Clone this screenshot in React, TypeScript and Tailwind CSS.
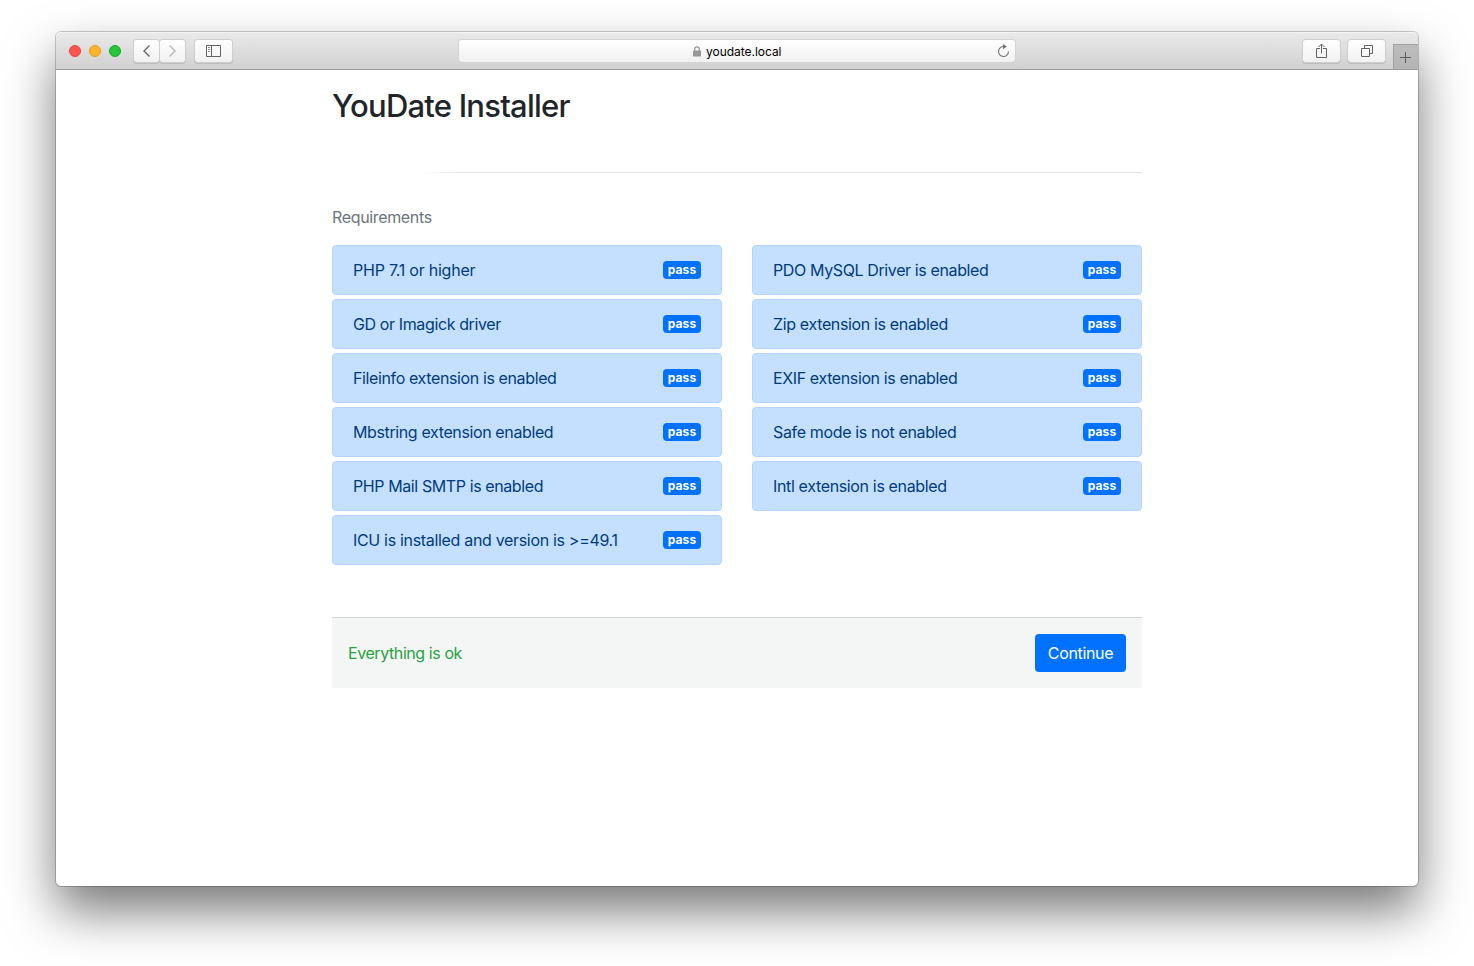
import type { ReactNode } from 'react';

type Item = { label: string; tracking: string };

const left: Item[] = [
  { label: 'PHP 7.1 or higher', tracking: 'tracking-[-0.23px]' },
  { label: 'GD or Imagick driver', tracking: 'tracking-[-0.38px]' },
  { label: 'Fileinfo extension is enabled', tracking: 'tracking-[-0.38px]' },
  { label: 'Mbstring extension enabled', tracking: 'tracking-[-0.38px]' },
  { label: 'PHP Mail SMTP is enabled', tracking: 'tracking-[-0.4px]' },
  { label: 'ICU is installed and version is >=49.1', tracking: 'tracking-[-0.32px]' },
];

const right: Item[] = [
  { label: 'PDO MySQL Driver is enabled', tracking: 'tracking-[-0.38px]' },
  { label: 'Zip extension is enabled', tracking: 'tracking-[-0.35px]' },
  { label: 'EXIF extension is enabled', tracking: 'tracking-[-0.38px]' },
  { label: 'Safe mode is not enabled', tracking: 'tracking-[-0.35px]' },
  { label: 'Intl extension is enabled', tracking: 'tracking-[-0.35px]' },
];

function ToolButton({ className, children }: { className: string; children: ReactNode }) {
  return (
    <button
      className={`flex h-[22px] items-center justify-center bg-linear-to-b from-white to-[#f1f1f1] shadow-[0_0_0_1px_#cecece,0_1px_0_1px_#bdbdbd] ${className}`}
    >
      {children}
    </button>
  );
}

function Toolbar() {
  return (
    <header className="flex h-[38px] items-start rounded-t-[5px] border-t border-b border-t-[#f4f4f4] border-b-[#9d9d9d] bg-linear-to-b from-[#e9e9e9] to-[#d1d1d1]">
      <div className="mt-3 ml-[13px] flex gap-2">
        <span className="size-3 rounded-full border border-[#e2463f] bg-[#ff5350]" />
        <span className="size-3 rounded-full border border-[#e09e28] bg-[#fdb42b]" />
        <span className="size-3 rounded-full border border-[#17a52b] bg-[#25c63a]" />
      </div>
      <div className="mt-[7px] ml-[13px] flex gap-px">
        <ToolButton className="w-[25px] rounded-[3px]">
          <svg width="9" height="14" viewBox="0 0 9 14" fill="none" stroke="#656565" strokeWidth="1.4">
            <path d="M7.500 1.500 2 7l5.500 5.500" />
          </svg>
        </ToolButton>
        <ToolButton className="w-[25px] rounded-[3px]">
          <svg width="9" height="14" viewBox="0 0 9 14" fill="none" stroke="#b9b9b9" strokeWidth="1.4">
            <path d="M1.500 1.500 7 7l-5.500 5.500" />
          </svg>
        </ToolButton>
      </div>
      <ToolButton className="mt-[7px] ml-[10px] w-[37px] rounded-[3px]">
        <svg width="15" height="12" viewBox="0 0 15 12" fill="none" stroke="#626262">
          <path d="M.500.500h14v11H.500zM5.500.500v11" />
          <path d="M2 2.500h2M2 4.500h2M2 6.500h2" stroke="#8a8a8a" />
        </svg>
      </ToolButton>
      <div className="mt-[7px] ml-[227px] flex h-[22px] w-[556px] items-center rounded-[3px] bg-linear-to-b from-white to-[#f0f0f0] pr-[5px] shadow-[0_0_0_1px_#d3d3d3,0_1px_0_0_#aeaeae]">
        <svg className="ml-[234px]" width="8" height="11" viewBox="0 0 8 11" fill="none">
          <path d="M1.700 5V3.200a2.300 2.300 0 0 1 4.600 0V5" stroke="#979797" strokeWidth="1.200" />
          <rect y="4.500" width="8" height="6" rx=".5" fill="#979797" />
        </svg>
        <span className="mt-[2px] ml-[5px] text-[12px] tracking-[-0.03px] whitespace-nowrap text-black">youdate.local</span>
        <svg className="ml-auto" width="13" height="14" viewBox="0 0 13 14" fill="none">
          <path d="M7 2.500a5 5 0 1 0 4.500 5" stroke="#737373" strokeWidth="1.100" />
          <path d="M6 0v5.200L9.800 2.600z" fill="#737373" />
        </svg>
      </div>
      <ToolButton className="mt-[7px] ml-[288px] w-[37px] rounded-[3px]">
        <svg width="11" height="16" viewBox="0 0 11 16" fill="none" stroke="#626262">
          <path d="M4 5.500H.500v9h10v-9H7M5.500 10.500V1M2.500 4l3-3 3 3" />
        </svg>
      </ToolButton>
      <ToolButton className="mt-[7px] ml-[8px] w-[37px] rounded-[3px]">
        <svg width="12" height="12" viewBox="0 0 12 12" fill="none" stroke="#626262">
          <path d="M.500 3.500h8v8h-8zM3.500 3V.500h8v8H9" />
        </svg>
      </ToolButton>
      <div className="mt-[11px] ml-auto flex h-[25px] w-[25px] items-center justify-center border-t border-l border-[#a0a0a0] bg-linear-to-b from-[#bdbdbd] to-[#b3b3b3] pr-[2px]">
        <svg width="11" height="11" viewBox="0 0 11 11" stroke="#5c5c5c">
          <path d="M5.500 0v11M0 5.500h11" />
        </svg>
      </div>
    </header>
  );
}

function Column({ items }: { items: Item[] }) {
  return (
    <ul className="flex flex-1 flex-col gap-1">
      {items.map(({ label, tracking }) => (
        <li
          key={label}
          className="flex h-[50px] items-center justify-between rounded-[4px] border border-[#b1d5ff] bg-[#c5e0ff] px-5"
        >
          <span className={`whitespace-nowrap text-[#003b80] ${tracking}`}>{label}</span>
          <span className="flex h-[18px] w-[38px] items-center justify-center rounded-[4px] bg-[#0072ff] text-[12px] leading-none font-bold tracking-[0.1px] text-white">
            pass
          </span>
        </li>
      ))}
    </ul>
  );
}

export default function App() {
  return (
    <div className="h-[966px] overflow-hidden bg-white px-14 pt-8 font-['Inter','Liberation_Sans',sans-serif] text-[16px] leading-6">
      <div className="h-[854px] rounded-[5px] bg-white shadow-[0_0_0_1px_rgba(0,0,0,0.2),0_25px_50px_rgba(0,0,0,0.53)]">
        <Toolbar />
        <main className="mx-auto w-[810px] pt-[17px]">
          <h1 className="text-[31px] leading-[38px] font-medium tracking-[-0.78px] text-[#212529]">YouDate Installer</h1>
          <div className="mt-[47px] h-px bg-linear-to-r from-white from-[11%] to-[#e3e4e5] to-[16%]" />
          <h2 className="mt-[32px] tracking-[-0.35px] text-[#6c757d]">Requirements</h2>
          <div className="mt-4 flex items-start gap-[30px]">
            <Column items={left} />
            <Column items={right} />
          </div>
          <footer className="mt-[52px] flex h-[71px] items-center justify-between border-t border-[#d2d5d6] bg-[#f4f6f6] px-4">
            <span className="tracking-[-0.42px] text-[#28a23c]">Everything is ok</span>
            <button className="h-[38px] w-[91px] rounded-[4px] bg-[#0072ff] tracking-[-0.35px] text-white">Continue</button>
          </footer>
        </main>
      </div>
    </div>
  );
}
